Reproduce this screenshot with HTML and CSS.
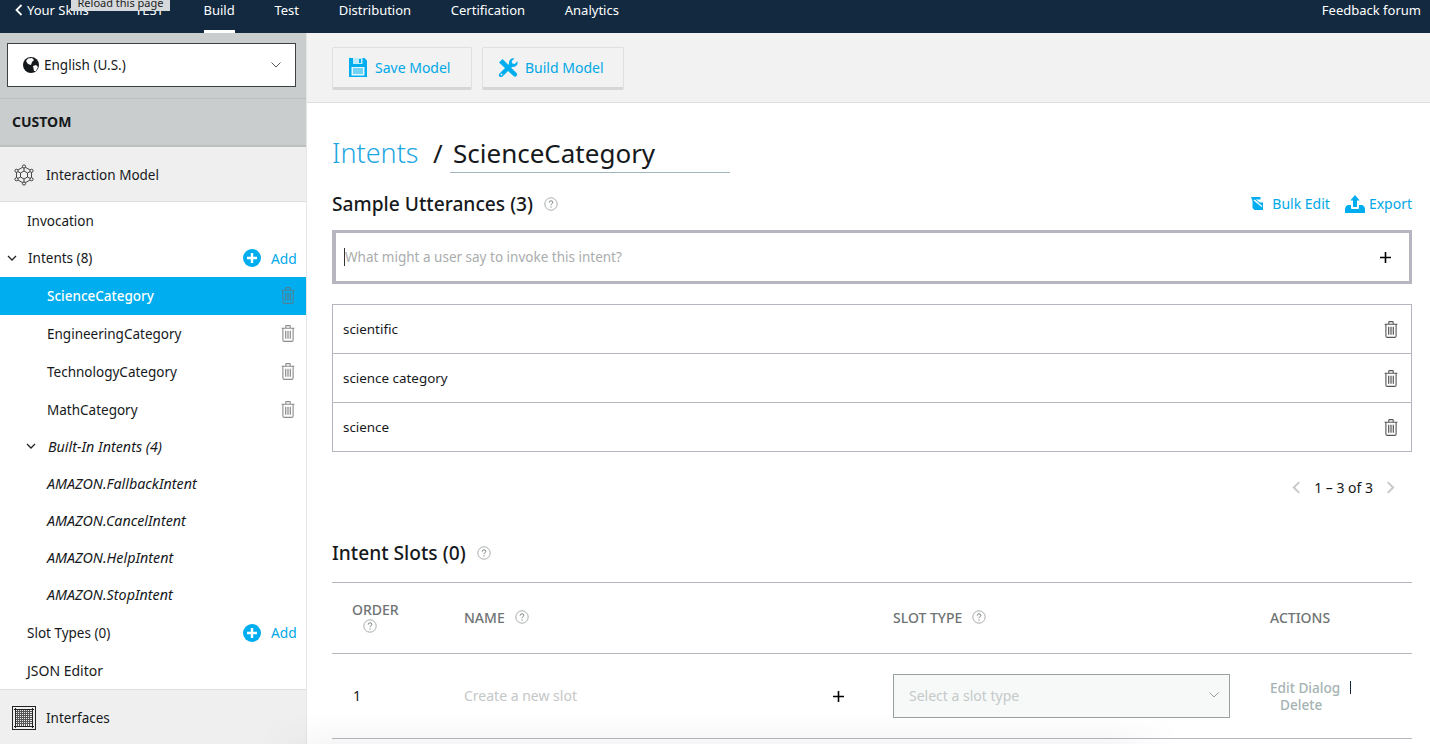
FILE: index.html
```html
<!DOCTYPE html>
<html lang="en">
<head>
<meta charset="utf-8">
<title>Intents / ScienceCategory</title>
<link rel="stylesheet" href="styles.css">
</head>
<body>
<svg class="defs" width="0" height="0" aria-hidden="true">
  <symbol id="trash" viewBox="0 0 14 17">
    <path d="M.6 3.200h12.800M4.800 3V1.300q0-.7.7-.7h3q.7 0 .7.700V3M1.900 3.200V15q0 1.400 1.400 1.400h7.400q1.400 0 1.400-1.400V3.200" fill="none" stroke="currentColor" stroke-width="1.100"/>
    <path d="M4.700 5.800v8M7 5.800v8M9.300 5.800v8" fill="none" stroke="currentColor" stroke-width="1.200"/>
  </symbol>
  <symbol id="help" viewBox="0 0 14 14">
    <circle cx="7" cy="7" r="6.200" fill="none" stroke="#a9adad" stroke-width="1"/>
    <path d="M5.200 5.600q0-1.800 1.800-1.800t1.800 1.600q0 1-1 1.500T7 8.200M7 9.400v1.200" fill="none" stroke="#7d8282" stroke-width="1"/>
  </symbol>
  <symbol id="addc" viewBox="0 0 18 18">
    <circle cx="9" cy="9" r="9" fill="#00aeef"/>
    <path d="M9 4v10M4 9h10" stroke="#fff" stroke-width="2.400"/>
  </symbol>
  <symbol id="plus" viewBox="0 0 11 11">
    <path d="M5.500 0v11M0 5.500h11" stroke="#000" stroke-width="1.600"/>
  </symbol>
</svg>

<header class="topbar">
  <a class="back"><svg class="back-icon" viewBox="0 0 8 12"><path d="M6.500 1 1.500 6l5 5" fill="none" stroke="#fff" stroke-width="1.800"/></svg>Your Skills</a>
  <nav class="tabs">
    <a class="tab">TEST</a>
    <a class="tab tab-active">Build</a>
    <a class="tab">Test</a>
    <a class="tab">Distribution</a>
    <a class="tab">Certification</a>
    <a class="tab">Analytics</a>
  </nav>
  <a class="feedback">Feedback forum</a>
  <div class="tooltip">Reload this page</div>
</header>

<div class="layout">
  <aside class="sidebar">
    <div class="lang-area">
      <div class="lang-select">
        <svg class="globe" viewBox="0 0 16 16"><circle cx="8" cy="8" r="8" fill="#16191c"/><path d="M5 1.500 9 1l2 2-2 2-1 3-3-1-2-3zM10 9l3-1 2 2-2 4-2 0z" fill="#fff"/></svg>
        <span class="lang-label">English (U.S.)</span>
        <svg class="lang-caret" viewBox="0 0 10 6"><path d="M.5.500 5 5 9.500.500" fill="none" stroke="#555" stroke-width="1"/></svg>
      </div>
    </div>
    <div class="custom-head">CUSTOM</div>
    <div class="section-head section-interaction">
      <svg class="model-icon" viewBox="0 0 22 22" fill="none" stroke="#333" stroke-width=".9">
        <path d="M11 2.500 18.500 6.800v8.400L11 19.500 3.500 15.200V6.800z"/>
        <path d="M11 7l3.500 2v4L11 15l-3.500-2V9zM11 2.500V7M18.500 6.800 14.500 9M18.500 15.200 14.500 13M11 19.500V15M3.500 15.200 7.500 13M3.500 6.800 7.500 9"/>
        <circle cx="11" cy="2.500" r="1.600" fill="#efefef"/><circle cx="18.500" cy="6.800" r="1.600" fill="#efefef"/><circle cx="18.500" cy="15.200" r="1.600" fill="#efefef"/><circle cx="11" cy="19.500" r="1.600" fill="#efefef"/><circle cx="3.500" cy="15.200" r="1.600" fill="#efefef"/><circle cx="3.500" cy="6.800" r="1.600" fill="#efefef"/>
      </svg>
      <span>Interaction Model</span>
    </div>
    <ul class="tree">
      <li class="row row-lvl1 row-invocation">Invocation</li>
      <li class="row row-intents">
        <svg class="chev" viewBox="0 0 10 6"><path d="M1 1l4 4 4-4" fill="none" stroke="#222" stroke-width="1.300"/></svg>
        <span class="grow">Intents (8)</span>
        <svg class="add-icon"><use href="#addc"/></svg><span class="add-text">Add</span>
      </li>
      <li class="row row-intent row-selected"><span class="grow">ScienceCategory</span><svg class="trash trash-sel"><use href="#trash"/></svg></li>
      <li class="row row-intent"><span class="grow">EngineeringCategory</span><svg class="trash trash-side"><use href="#trash"/></svg></li>
      <li class="row row-intent"><span class="grow">TechnologyCategory</span><svg class="trash trash-side"><use href="#trash"/></svg></li>
      <li class="row row-intent"><span class="grow">MathCategory</span><svg class="trash trash-side"><use href="#trash"/></svg></li>
      <li class="row row-builtin-head">
        <svg class="chev" viewBox="0 0 10 6"><path d="M1 1l4 4 4-4" fill="none" stroke="#222" stroke-width="1.300"/></svg>
        <span>Built-In Intents (4)</span>
      </li>
      <li class="row row-builtin">AMAZON.FallbackIntent</li>
      <li class="row row-builtin">AMAZON.CancelIntent</li>
      <li class="row row-builtin">AMAZON.HelpIntent</li>
      <li class="row row-builtin">AMAZON.StopIntent</li>
      <li class="row row-lvl1 row-slot">
        <span class="grow">Slot Types (0)</span>
        <svg class="add-icon"><use href="#addc"/></svg><span class="add-text">Add</span>
      </li>
      <li class="row row-lvl1 row-json">JSON Editor</li>
    </ul>
    <div class="section-head section-interfaces">
      <svg class="grid-icon" viewBox="0 0 24 24" shape-rendering="crispEdges">
        <rect x=".5" y=".5" width="23" height="23" fill="none" stroke="#222"/>
        <path d="M3.500 2v20M20.500 2v20M2 3.500h20M2 20.500h20" stroke="#222"/>
        <path d="M5.500 4v16M7.500 4v16M9.500 4v16M11.500 4v16M13.500 4v16M15.500 4v16M17.500 4v16M4 5.500h16M4 7.500h16M4 9.500h16M4 11.500h16M4 13.500h16M4 15.500h16M4 17.500h16" stroke="#555"/>
      </svg>
      <span>Interfaces</span>
    </div>
  </aside>

  <main class="main">
    <div class="toolbar">
      <button class="tool-btn tool-save">
        <svg class="tool-icon" viewBox="0 0 18 19"><path d="M0 0h15.500L18 2.500V19H0z" fill="#00aeef"/><path d="M4 0h9.500v6H4z" fill="#bfeaf9"/><path d="M10 1h2v4h-2z" fill="#00aeef"/><path d="M2.500 9h13v8.500h-13z" fill="#e4f6fc"/><path d="M4 11h10M4 13h10M4 15h10" stroke="#00aeef"/></svg>
        Save Model
      </button>
      <button class="tool-btn tool-build">
        <svg class="tool-icon tool-icon-build" viewBox="0 0 20 20" fill="#00aeef">
          <path d="M1 4.500 4.500 1l14 14q1 1.500 0 3t-3 0z"/>
          <path d="M1.500 15.500 11 6q-.5-4 2.500-5.500 2-.5 3 0L13.800 3l.5 2.500 2.500.5 2.600-2.700q.6 2-.4 3.700-2 2.500-5 2L4.500 18.500q-1.500 1-3 0t0-3z"/>
          <circle cx="3.500" cy="16.500" r=".9" fill="#f2f2f2"/>
        </svg>
        Build Model
      </button>
    </div>

    <div class="content">
      <div class="title-row">
        <a class="crumb">Intents</a>
        <span class="slash">/</span>
        <span class="intent-name">ScienceCategory</span>
      </div>

      <div class="sub-row">
        <h2 class="sub-title">Sample Utterances (3)</h2>
        <svg class="help help-utter"><use href="#help"/></svg>
        <div class="sub-actions">
          <a class="link link-bulk">
            <svg class="bulk-icon" viewBox="0 0 13 13"><path d="M0 0h9.500v2.500H3.500L6 5.500h6V13H3.500L1.500 11V4z" fill="#00aeef"/><path d="M3 3l8 6.500" stroke="#fff" stroke-width="1.200"/><path d="M4 2.200l8 6.300" stroke="#00aeef" stroke-width="1"/></svg>
            Bulk Edit</a>
          <a class="link link-export">
            <svg class="export-icon" viewBox="0 0 20 18"><path d="M10 0l4.700 5.500H12V12H8V5.500H5.300z" fill="#00aeef"/><path d="M0 18v-4q0-2.500 2.500-4H6v-1.500L6 13q0 1 1 1h6q1 0 1-1V8.500 10h3.500Q20 11.500 20 14v4z" fill="#00aeef"/></svg>
            Export</a>
        </div>
      </div>

      <div class="utter-input">
        <span class="caret"></span>
        <span class="placeholder grow">What might a user say to invoke this intent?</span>
        <svg class="plus"><use href="#plus"/></svg>
      </div>

      <ul class="utter-list">
        <li class="utter-row"><span class="grow">scientific</span><svg class="trash trash-list"><use href="#trash"/></svg></li>
        <li class="utter-row"><span class="grow">science category</span><svg class="trash trash-list"><use href="#trash"/></svg></li>
        <li class="utter-row"><span class="grow">science</span><svg class="trash trash-list"><use href="#trash"/></svg></li>
      </ul>

      <div class="pager">
        <svg class="pager-arrow" viewBox="0 0 8 12"><path d="M7 1 2 6l5 5" fill="none" stroke="#c5c9c9" stroke-width="1.800"/></svg>
        <span class="pager-text">1 – 3 of 3</span>
        <svg class="pager-arrow" viewBox="0 0 8 12"><path d="M1 1l5 5-5 5" fill="none" stroke="#c5c9c9" stroke-width="1.800"/></svg>
      </div>

      <div class="slots-head">
        <h2 class="sub-title">Intent Slots (0)</h2>
        <svg class="help help-slots"><use href="#help"/></svg>
      </div>

      <div class="slots">
        <div class="slots-grid slots-header">
          <div class="th th-order">ORDER<svg class="help help-order"><use href="#help"/></svg></div>
          <div class="th">NAME<svg class="help help-th"><use href="#help"/></svg></div>
          <div class="th">SLOT TYPE<svg class="help help-th"><use href="#help"/></svg></div>
          <div class="th th-actions">ACTIONS</div>
        </div>
        <div class="slots-grid slots-row">
          <div class="order-num">1</div>
          <div class="slot-name">
            <span class="grow slot-ph">Create a new slot</span>
            <svg class="plus plus-slot"><use href="#plus"/></svg>
          </div>
          <div class="slot-select">
            <span class="grow">Select a slot type</span>
            <svg class="slot-caret" viewBox="0 0 10 6"><path d="M.5.500 5 5 9.500.500" fill="none" stroke="#9aa0a0" stroke-width="1"/></svg>
          </div>
          <div class="actions">
            <div class="action-top"><span>Edit Dialog</span><span class="action-sep"></span></div>
            <div class="action-del">Delete</div>
          </div>
        </div>
      </div>
    </div>
  </main>
</div>
<div class="bottom-fade"></div>
</body>
</html>
```

FILE: styles.css
```css
* { box-sizing: border-box; }
html, body { margin: 0; height: 744px; overflow: hidden; }
body { font-family: "Noto Sans", "Open Sans", sans-serif; font-size: 14px; color: #16191c; background: #fff; }
ul { list-style: none; margin: 0; padding: 0; }
.defs { position: absolute; }
.grow { flex: 1; }

/* top bar */
.topbar { height: 33px; background: #12293f; color: #fff; display: flex; align-items: flex-start; padding: 0 9px 0 15px; position: relative; font-size: 13px; }
.back { display: flex; align-items: center; height: 20px; width: 120px; }
.back-icon { width: 8px; height: 12px; margin-right: 4px; }
.tabs { display: flex; flex: 1; }
.tab { height: 33px; line-height: 20px; margin-right: 39.700px; }
.tab-active { border-bottom: 3px solid #fff; }
.feedback { line-height: 20px; }
.tooltip { position: absolute; left: 71px; top: -4px; width: 99px; height: 15px; background: #d5d9dc; color: #222; font-size: 11px; line-height: 13px; text-align: center; }

.layout { display: flex; height: 711px; }

/* sidebar */
.sidebar { width: 307px; flex: none; border-right: 1px solid #e4e6e6; display: flex; flex-direction: column; font-size: 13.500px; }
.lang-area { height: 65px; background: #c9cdcd; padding: 10px 10px 0 7px; }
.lang-select { height: 44px; background: #fff; border: 1px solid #3c4043; display: flex; align-items: center; padding: 0 14px 0 15px; }
.globe { width: 16px; height: 16px; margin-right: 5px; }
.lang-label { flex: 1; }
.lang-caret { width: 10px; height: 6px; }
.custom-head { height: 49px; background: #c9cdcd; border-top: 1px solid #bcc0c0; border-bottom: 2px solid #bcc0c0; padding-left: 12px; line-height: 46px; font-weight: 700; font-size: 14px; }
.section-head { display: flex; align-items: center; background: #efefef; }
.section-interaction { height: 55px; border-bottom: 1px solid #dcdfdf; padding: 2px 0 0 13px; }
.section-interfaces { flex: 1; border-top: 1px solid #dcdfdf; padding: 2px 0 0 12px; }
.model-icon { width: 22px; height: 22px; margin-right: 11px; }
.grid-icon { width: 24px; height: 24px; margin-right: 10px; }
.tree { display: flex; flex-direction: column; }
.row { display: flex; align-items: center; padding-right: 10px; }
.row-lvl1 { padding-left: 27px; }
.row-invocation { height: 38px; padding-bottom: 1px; }
.row-intents { height: 37px; padding-left: 7px; padding-bottom: 1px; }
.row-intent { height: 38px; padding-left: 47px; padding-bottom: 1px; }
.row-selected { background: #00aeef; color: #fff; font-weight: 500; }
.row-builtin-head { height: 36px; padding-left: 26px; padding-bottom: 2px; font-style: italic; font-size: 14.300px; }
.row-builtin { height: 37px; padding-left: 47px; font-style: italic; font-size: 14.300px; }
.row-slot { height: 39px; }
.row-json { height: 37px; font-size: 14px; }
.chev { width: 10px; height: 6px; margin-right: 11px; }
.row-builtin-head .chev { margin-right: 12px; }
.add-icon { width: 18px; height: 18px; margin-right: 10px; }
.add-text { color: #00a8e6; width: 25px; font-size: 13.800px; }
.trash { width: 14px; height: 17px; flex: none; }
.trash-side { color: #8a8a8a; margin-right: 1px; }
.trash-sel { color: #4f7f96; margin-right: 1px; }
.trash-list { color: #555; }

/* main */
.main { flex: 1; min-width: 0; display: flex; flex-direction: column; }
.toolbar { height: 70px; background: #f2f2f2; border-bottom: 1px solid #dcdfdf; display: flex; padding: 14px 0 0 25px; gap: 10px; }
.tool-btn { height: 43px; background: #f2f2f2; border: 1px solid #dfe1e1; border-bottom: 3px solid #d5d7d7; border-radius: 2px; color: #00a8e6; font: inherit; display: flex; align-items: center; padding: 0; }
.tool-save { width: 140px; padding-left: 16px; }
.tool-build { width: 142px; padding-left: 15px; }
.tool-icon { width: 18px; height: 19px; margin-right: 8px; }
.tool-icon-build { width: 20px; height: 20px; margin-right: 7px; }
.content { padding: 0 18px 0 25px; }
.title-row { display: flex; align-items: baseline; height: 87px; padding-top: 30px; font-size: 26px; line-height: 40px; }
.crumb { color: #1ea7e2; font-weight: 300; width: 85px; font-size: 27px; }
.slash { margin-left: 16px; width: 17px; }
.intent-name { width: 280px; height: 40px; padding-left: 3px; border-bottom: 1px solid #9db5bd; line-height: 40px; }
.sub-row { display: flex; align-items: center; height: 28px; }
.sub-title { font-size: 19.200px; font-weight: 500; margin: 0; line-height: 28px; }
.help { width: 14px; height: 14px; flex: none; }
.help-utter { margin-left: 11px; }
.sub-actions { margin-left: auto; display: flex; gap: 15px; align-items: center; padding-bottom: 1px; }
.link { color: #00a8e6; display: flex; align-items: center; }
.bulk-icon { width: 13px; height: 13px; margin-right: 8px; }
.export-icon { width: 20px; height: 18px; margin-right: 4px; }
.utter-input { height: 54px; margin-top: 12px; border: 3px solid #b6b5c0; border-left-width: 4px; display: flex; align-items: center; padding: 0 18px 0 8px; font-size: 13.500px; }
.caret { width: 1px; height: 18px; background: #333; }
.placeholder { color: #a9adad; }
.plus { width: 11px; height: 11px; flex: none; }
.utter-list { margin-top: 20px; border: 1px solid #b6b5c0; font-size: 13.400px; }
.utter-row { height: 49px; display: flex; align-items: center; padding: 0 13px 0 10px; border-top: 1px solid #b6b5c0; }
.utter-row:first-child { height: 48px; border-top: 0; }
.pager { display: flex; justify-content: flex-end; align-items: center; height: 70px; padding-right: 15px; }
.pager-arrow { width: 12px; height: 13px; }
.pager-text { margin: 0 12px; }
.slots-head { display: flex; align-items: center; height: 30px; margin-top: 16px; }
.help-slots { margin-left: 11px; }
.slots { margin-top: 14px; border-top: 1px solid #b6b5c0; }
.slots-grid { display: grid; grid-template-columns: 132px 429px 377px 1fr; border-bottom: 1px solid #b6b5c0; }
.slots-header { height: 71px; align-items: center; color: #6e7373; font-weight: 500; padding-bottom: 2px; }
.th { display: flex; align-items: center; }
.th:first-child { padding-left: 20px; }
.th-order { flex-direction: column; align-items: flex-start; line-height: 18px; }
.help-order { margin: 0 0 0 11px; }
.help-th { margin-left: 10px; }
.slots-row { height: 85px; align-items: center; }
.order-num { padding-left: 21px; padding-bottom: 2px; }
.slot-name { display: flex; align-items: center; padding-right: 49px; }
.slot-ph { color: #c4c7c7; padding-bottom: 2px; }
.slot-select { width: 337px; height: 44px; background: #f7f9f8; border: 1px solid #9aa0a0; color: #c4c9c9; display: flex; align-items: center; padding: 0 10px 2px 15px; }
.slot-caret { width: 10px; height: 6px; }
.actions { color: #a5b3b3; font-weight: 500; line-height: 17px; font-size: 13.600px; }
.action-top { display: flex; align-items: center; }
.action-sep { width: 1px; height: 13px; background: #12293f; margin-left: 10px; }
.action-del { padding-left: 10px; }

.bottom-fade { position: absolute; left: 260px; bottom: 0; width: 920px; height: 30px; pointer-events: none; background: linear-gradient(to bottom, rgba(0,0,0,0), rgba(0,0,0,.035)); -webkit-mask-image: linear-gradient(to right, transparent, #000 8%, #000 92%, transparent); mask-image: linear-gradient(to right, transparent, #000 8%, #000 92%, transparent); }
```
